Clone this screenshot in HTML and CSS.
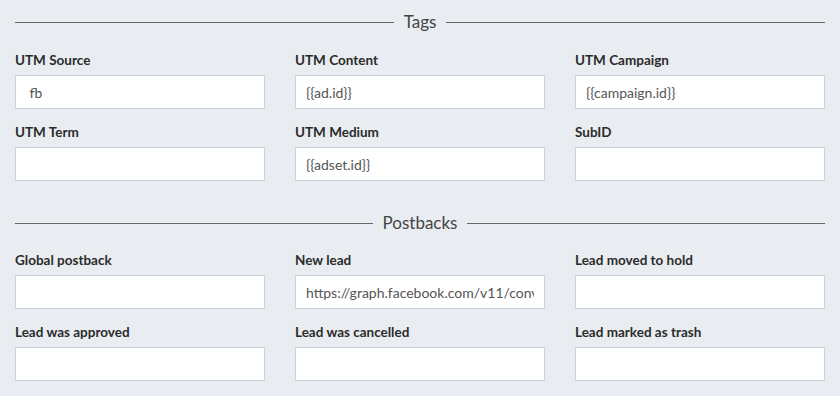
FILE: index.html
```html
<!DOCTYPE html>
<html lang="en">
<head>
  <meta charset="UTF-8" />
  <title>Tags and Postbacks</title>
  <link rel="stylesheet" href="styles.css">
</head>
<body>

  <!-- Tags -->
  <div class="section-title"><span>Tags</span></div>
  <div class="field-grid">
    <div class="field">
      <label>UTM Source</label>
      <input type="text" value=" fb" />
    </div>
    <div class="field">
      <label>UTM Content</label>
      <input type="text" value="{{ad.id}}" />
    </div>
    <div class="field">
      <label>UTM Campaign</label>
      <input type="text" value="{{campaign.id}}" />
    </div>
    <div class="field">
      <label>UTM Term</label>
      <input type="text" value="" />
    </div>
    <div class="field">
      <label>UTM Medium</label>
      <input type="text" value="{{adset.id}}" />
    </div>
    <div class="field">
      <label>SubID</label>
      <input type="text" value="" />
    </div>
  </div>

  <!-- Postbacks -->
  <div class="section-title second"><span>Postbacks</span></div>
  <div class="field-grid">
    <div class="field">
      <label>Global postback</label>
      <input type="text" value="" />
    </div>
    <div class="field">
      <label>New lead</label>
      <input type="text" value="https://graph.facebook.com/v11/conversions" />
    </div>
    <div class="field">
      <label>Lead moved to hold</label>
      <input type="text" value="" />
    </div>
    <div class="field">
      <label>Lead was approved</label>
      <input type="text" value="" />
    </div>
    <div class="field">
      <label>Lead was cancelled</label>
      <input type="text" value="" />
    </div>
    <div class="field">
      <label>Lead marked as trash</label>
      <input type="text" value="" />
    </div>
  </div>

</body>
</html>
```

FILE: styles.css
```css
body {
  margin: 0;
  padding: 11px 15px 0;
  font-family: 'Lato', sans-serif;
  background-color: #e9edf1;
  color: #333;
}

/* Heading with a rule on each side */
.section-title {
  display: flex;
  align-items: center;
  gap: 10px;
  font-size: 17px;
  line-height: 22px;
  color: #444;
  margin-bottom: 18px;
}

.section-title::before,
.section-title::after {
  content: '';
  flex: 1;
  height: 1px;
  background-color: #666;
}

.section-title.second {
  margin-top: 31px;
  margin-bottom: 17px;
}

.field-grid {
  display: grid;
  grid-template-columns: repeat(3, 1fr);
  column-gap: 30px;
  row-gap: 14px;
}

.field label {
  display: block;
  font-size: 13.5px;
  font-weight: 700;
  line-height: 18px;
  color: #2b2b2b;
  margin-bottom: 6px;
}

.field input {
  display: block;
  width: 100%;
  height: 34px;
  box-sizing: border-box;
  padding: 0 10px;
  border: 1px solid #ccd1d9;
  background: #fff;
  font-family: 'Lato', sans-serif;
  font-size: 14px;
  color: #555;
  outline: none;
}
```
